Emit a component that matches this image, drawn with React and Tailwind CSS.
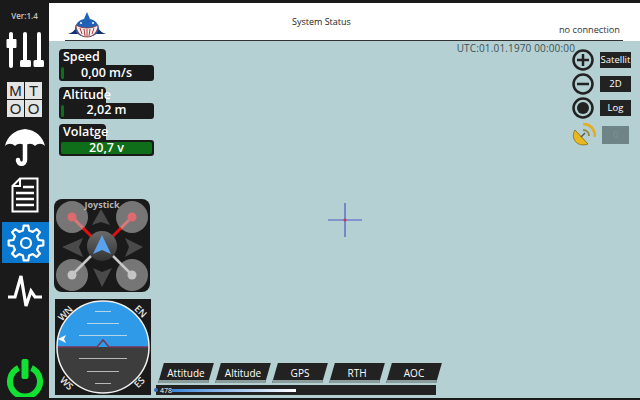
import React from 'react';

const font = { fontFamily: '"Open Sans", "Noto Sans", sans-serif' };

// outline of an 8 tooth gear, built from polar points
function gearPath(teeth, outer, inner) {
  const pts = [];
  const step = (Math.PI * 2) / teeth;
  for (let i = 0; i < teeth; i++) {
    const a = i * step - Math.PI / 2;
    const add = (r, d) => pts.push(`${(Math.cos(a + d * step) * r).toFixed(2)} ${(Math.sin(a + d * step) * r).toFixed(2)}`);
    add(inner, -0.3);
    add(outer, -0.17);
    add(outer, 0.17);
    add(inner, 0.3);
  }
  return `M${pts.join(' L')} Z`;
}

function SlidersIcon() {
  return (
    <svg width="38" height="36" viewBox="0 0 38 36" className="block">
      <g fill="#fff">
        <rect x="3" y="0" width="4" height="36" rx="2" />
        <rect x="0.5" y="7" width="10" height="9" rx="1" />
        <rect x="17" y="0" width="4" height="30" rx="2" />
        <rect x="14" y="28" width="11" height="7" rx="1.5" />
        <rect x="31" y="0" width="4" height="30" rx="2" />
        <rect x="27.5" y="28" width="10.5" height="7" rx="1.5" />
      </g>
    </svg>
  );
}

function ModeIcon() {
  const cell = 'w-[17px] h-[17px] bg-[#e4e4e4] text-[#222] text-[15px] leading-[17px] text-center';
  return (
    <div className="grid grid-cols-2 gap-[1px] w-[35px]" style={{ fontFamily: '"Liberation Sans", sans-serif' }}>
      <div className={cell}>M</div>
      <div className={cell}>T</div>
      <div className={cell}>O</div>
      <div className={cell}>O</div>
    </div>
  );
}

function UmbrellaIcon() {
  return (
    <svg width="40" height="38" viewBox="0 0 40 38" className="block">
      <path d="M20 0 C9 1 2 8 0 17 C3 14 7 14 10 17 C13 14 17 14 20 17 C23 14 27 14 30 17 C33 14 37 14 40 17 C38 8 31 1 20 0 Z" fill="#fff" />
      <path d="M20 15 V31 C20 36 13 36 13 31" fill="none" stroke="#fff" strokeWidth="4.5" strokeLinecap="round" />
    </svg>
  );
}

function DocIcon() {
  return (
    <svg width="28" height="36" viewBox="0 0 28 36" className="block">
      <path d="M9 1.5 H26.5 V34.5 H1.5 V9 Z M9 1.5 V9 H1.5" fill="#1a1a1a" stroke="#fff" strokeWidth="2" />
      <g stroke="#fff" strokeWidth="2.5">
        <path d="M12 10 H23" />
        <path d="M5 16 H23" />
        <path d="M5 22 H23" />
        <path d="M5 28 H23" />
      </g>
    </svg>
  );
}

function GearIcon() {
  return (
    <svg width="38" height="38" viewBox="-19 -19 38 38" className="block">
      <path d={gearPath(8, 17.5, 13)} fill="none" stroke="#fff" strokeWidth="2.2" strokeLinejoin="round" />
      <circle r="5" fill="none" stroke="#fff" strokeWidth="2.2" />
    </svg>
  );
}

function PulseIcon() {
  return (
    <svg width="36" height="36" viewBox="0 0 36 36" className="block">
      <path d="M1 24 H8 L14 3 L19 33 L24 18 L28 24 H35" fill="none" stroke="#fff" strokeWidth="3.2" strokeLinejoin="miter" />
    </svg>
  );
}

function PowerIcon() {
  return (
    <svg width="38" height="38" viewBox="0 0 38 38" className="block">
      <path d="M12.5 9 A15 15 0 1 0 25.5 9" fill="none" stroke="#12e033" strokeWidth="6" />
      <rect x="15.5" y="0" width="7" height="20" rx="2" fill="#12e033" />
    </svg>
  );
}

function Sidebar() {
  return (
    <div className="w-[49px] shrink-0 bg-[#1a1a1a] flex flex-col items-center">
      <div className="text-[#c8c8c8] text-[8px] font-semibold mt-[7px] h-[11px] leading-[11px]">Ver:1.4</div>
      <div className="mt-[11px]"><SlidersIcon /></div>
      <div className="mt-[14px]"><ModeIcon /></div>
      <div className="mt-[12px]"><UmbrellaIcon /></div>
      <div className="mt-[10px]"><DocIcon /></div>
      <div className="mt-[9px] w-[47px] h-[41px] ml-[2px] bg-[#0a78cf] flex items-center justify-center"><GearIcon /></div>
      <div className="mt-[10px]"><PulseIcon /></div>
      <div className="mt-auto mb-[3px]"><PowerIcon /></div>
    </div>
  );
}

function SharkLogo() {
  return (
    <svg width="40" height="26" viewBox="0 0 40 26" className="block">
      <path d="M1 22 C5 21 7 19 9 16 L13 22 Z" fill="#14306e" />
      <path d="M39 22 C35 21 33 19 31 16 L27 22 Z" fill="#14306e" />
      <path d="M20 0 L23 7 C28 8 32 12 32 17 C30 23 26 25 20 25 C14 25 10 23 8 17 C8 12 12 8 17 7 Z" fill="#1f62b8" />
      <path d="M9 13 C15 17 25 17 31 13 C31 20 26 25 20 25 C14 25 9 20 9 13 Z" fill="#f4f0ee" stroke="#8c2a2a" strokeWidth="0.8" />
      <path d="M13 16 L15 22 M17 17 L18 24 M20 17 V25 M23 17 L22 24 M27 16 L25 22" stroke="#b03838" strokeWidth="1" />
      <circle cx="14" cy="11" r="1" fill="#fff" />
      <circle cx="26" cy="11" r="1" fill="#fff" />
    </svg>
  );
}

function Gauge({ label, value, fill, fillClass }) {
  return (
    <div className="w-[95px] h-[32px] flex flex-col">
      <div className="w-[47px] h-[17px] bg-[#1a1a1a] rounded-t-[4px] text-white text-[12.5px] font-semibold leading-[16px] pl-[4px] whitespace-nowrap">{label}</div>
      <div className="relative h-[16px] -mt-[1px] bg-[#1a1a1a] rounded-[3px] rounded-tl-none p-[2px]">
        <div className={`h-full rounded-[2px] ${fillClass}`} style={{ width: fill }} />
        <div className="absolute inset-0 flex items-center justify-center text-white text-[12.5px] font-semibold leading-none">{value}</div>
      </div>
    </div>
  );
}

function Joystick() {
  const pads = [[18, 18], [78, 18], [18, 76], [78, 76]];
  return (
    <svg width="96" height="93" viewBox="0 0 96 93" className="block">
      <defs>
        <linearGradient id="hub" x1="0" y1="0" x2="0" y2="1">
          <stop offset="0" stopColor="#6a6a6a" />
          <stop offset="1" stopColor="#333" />
        </linearGradient>
      </defs>
      <rect width="96" height="93" rx="8" fill="#1a1a1a" />
      {pads.map(([x, y]) => <circle key={`${x}${y}`} cx={x} cy={y} r="16" fill="#767676" />)}
      <path d="M47 10 L56 26 L47 23 L38 26 Z" fill="#4a4a4a" />
      <path d="M48 88 L58 69 L48 73 L39 69 Z" fill="#4a4a4a" />
      <path d="M8 48 L29 39 L25 48 L29 58 Z" fill="#4a4a4a" />
      <path d="M89 48 L71 39 L75 48 L71 58 Z" fill="#4a4a4a" />
      <path d="M18 18 L30 30" stroke="#d87878" strokeWidth="3" />
      <path d="M78 18 L66 30" stroke="#d87878" strokeWidth="3" />
      <path d="M29 29 L38 38" stroke="#e01010" strokeWidth="3" />
      <path d="M67 29 L58 38" stroke="#e01010" strokeWidth="3" />
      <path d="M18 76 L38 56" stroke="#c8c8c8" strokeWidth="2.5" />
      <path d="M78 76 L58 56" stroke="#c8c8c8" strokeWidth="2.5" />
      <circle cx="18" cy="18" r="4.5" fill="#dc6a6e" />
      <circle cx="78" cy="18" r="4.5" fill="#dc6a6e" />
      <circle cx="18" cy="76" r="4.5" fill="#c4c4c4" />
      <circle cx="78" cy="76" r="4.5" fill="#c4c4c4" />
      <circle cx="48" cy="47" r="15" fill="url(#hub)" />
      <path d="M48 36 L57 55 L48 51 L39 55 Z" fill="#5aa2ee" />
      <text x="48" y="8.5" textAnchor="middle" fontSize="9" fontWeight="700" fill="#b4b4b4" style={font}>Joystick</text>
    </svg>
  );
}

function AttitudeIndicator() {
  const sky = [[12, 16], [24, 32], [36, 48]];
  const ground = [[59, 48], [72, 32], [84, 16]];
  const corners = [
    ['WN', 11, 15, -45], ['EN', 85, 13, 45], ['WS', 11, 85, 45], ['ES', 85, 84, -45],
  ];
  return (
    <svg width="96" height="96" viewBox="0 0 96 96" className="block">
      <rect width="96" height="96" fill="#1a1a1a" />
      <path d="M2 48 A46 46 0 0 1 94 48 Z" fill="#2f9be8" />
      <path d="M2 48 A46 46 0 0 0 94 48 Z" fill="#3d3d3d" />
      {sky.map(([y, w]) => <rect key={y} x={48 - w / 2} y={y} width={w} height="1" fill="#b4d4e8" />)}
      {ground.map(([y, w]) => <rect key={y} x={48 - w / 2} y={y} width={w} height="1" fill="#b8b8b8" />)}
      <path d="M2 48 H42 L48 41 L54 48 H94" fill="none" stroke="#7a3658" strokeWidth="1.5" />
      <path d="M3 40 L11 36 L9 40 L11 44 Z" fill="#fff" />
      <circle cx="48" cy="48" r="46" fill="none" stroke="#f0f0f0" strokeWidth="1.5" />
      {corners.map(([t, x, y, r]) => (
        <text key={t} x={x} y={y} transform={`rotate(${r} ${x} ${y})`} textAnchor="middle" dominantBaseline="middle" fontSize="9.5" fontWeight="600" fill="#e8e8e8" style={font}>{t}</text>
      ))}
    </svg>
  );
}

function CircleIcon({ kind }) {
  return (
    <svg width="22" height="22" viewBox="0 0 22 22" className="block">
      <circle cx="11" cy="11" r="9.5" fill="none" stroke="#222" strokeWidth="2.5" />
      {kind === 'plus' && <path d="M5 11 H17 M11 5 V17" stroke="#222" strokeWidth="2.5" />}
      {kind === 'minus' && <path d="M5 11 H17" stroke="#222" strokeWidth="2.5" />}
      {kind === 'dot' && <circle cx="11" cy="11" r="6" fill="#222" />}
    </svg>
  );
}

function SatelliteIcon() {
  return (
    <svg width="24" height="24" viewBox="0 0 24 24" className="block">
      <path d="M3 7 C-2 15 5 25 16 21 Z" fill="#e8b820" stroke="#8a6a10" strokeWidth="0.8" />
      <path d="M9 14 L13 10" stroke="#555" strokeWidth="1.5" />
      <path d="M11 7 C15 7 17 10 17 13" fill="none" stroke="#9a8a40" strokeWidth="2" />
      <path d="M11 1 C18 1 23 6 23 14" fill="none" stroke="#e0b020" strokeWidth="2.8" />
    </svg>
  );
}

function MapButton({ children }) {
  return <div className="w-[31px] h-[16px] bg-[#222] text-white text-[9.5px] leading-[16px] text-center whitespace-nowrap">{children}</div>;
}

function Tab({ children }) {
  return (
    <div className="relative w-[50px] h-[20px] flex items-center justify-center">
      <div className="absolute inset-0 -skew-x-[16deg] bg-[#222] border-b-[3px] border-[#8a9c9c]" />
      <span className="relative text-white text-[10px] font-medium">{children}</span>
    </div>
  );
}

export default function App() {
  return (
    <div className="w-[640px] h-[400px] flex flex-col overflow-hidden bg-[#1a1a1a]" style={font}>
      <div className="h-[3px] shrink-0 bg-[#1a1a1a]" />
      <div className="flex flex-1 min-h-0">
        <Sidebar />
        <div className="flex-1 flex flex-col min-w-0 mb-[2px]">
          {/* header */}
          <div className="h-[38px] shrink-0 bg-white flex items-stretch pl-[16px] pr-[17px]">
            <div className="flex-1 border-b border-[#333] relative flex">
              <div className="pt-[9px] pl-[2px]"><SharkLogo /></div>
              <div className="absolute left-[227px] top-[12px] text-[9px] leading-[14px] text-[#222]">System Status</div>
              <div className="ml-auto self-end text-[9.2px] leading-[14px] text-[#333] pr-[3px] pb-[3px]">no connection</div>
            </div>
          </div>

          {/* map */}
          <div className="relative flex-1 bg-[#b5d0d2] flex min-h-0">
            <div className="w-[106px] shrink-0 flex flex-col pl-[5px]">
              <div className="flex flex-col gap-[5.5px] pl-[5px] pt-[8px]">
                <Gauge label="Speed" value="0,00 m/s" fill="3%" fillClass="bg-[#0e6e1a]" />
                <Gauge label="Altitude" value="2,02 m" fill="3%" fillClass="bg-[#0e6e1a]" />
                <Gauge label="Volatge" value="20,7 v" fill="100%" fillClass="bg-[#0e6e1a]" />
              </div>
              <div className="mt-[43px]"><Joystick /></div>
              <div className="mt-[7px] ml-[1px]"><AttitudeIndicator /></div>
            </div>

            <div className="flex-1 flex flex-col min-w-0">
              <div className="text-[10px] leading-[14px] text-[#3c5057] text-right -mr-[4px] tracking-[0.15px] whitespace-nowrap">UTC:01.01.1970 00:00:00</div>
              <div className="mt-auto flex gap-[7px] pl-[6px]">
                <Tab>Attitude</Tab>
                <Tab>Altitude</Tab>
                <Tab>GPS</Tab>
                <Tab>RTH</Tab>
                <Tab>AOC</Tab>
              </div>
              <div className="relative ml-[1px] mt-[2px] mb-[3px] w-[280px] h-[10px] bg-[#222] flex items-center pl-[4px]">
                <div className="absolute -left-[2px] top-[3px] w-[4px] h-[4px] rounded-full bg-[#3a6ab8]" />
                <span className="text-white text-[7px] leading-none w-[12px]">478</span>
                <div className="w-[124px] h-[3px] bg-gradient-to-r from-[#3a86d8] to-white" />
              </div>
            </div>

            <div className="w-[69px] shrink-0 flex flex-col items-start pt-[7px] pl-[1px]">
              <div className="flex items-center gap-[6px] h-[24px]"><CircleIcon kind="plus" /><MapButton>Satellit</MapButton></div>
              <div className="flex items-center gap-[6px] h-[24px]"><CircleIcon kind="minus" /><MapButton>2D</MapButton></div>
              <div className="flex items-center gap-[6px] h-[24px]"><CircleIcon kind="dot" /><MapButton>Log</MapButton></div>
              <div className="flex items-center gap-[6px] h-[28px] mt-[1px]">
                <SatelliteIcon />
                <div className="w-[27px] h-[18px] bg-[#6f8487] text-[#7d9296] text-[9px] leading-[18px] text-center">0</div>
              </div>
            </div>

            {/* crosshair over the map */}
            <svg width="34" height="34" viewBox="0 0 34 34" className="absolute left-[279px] top-[162px]">
              <path d="M0 17 H34 M17 0 V34" stroke="#4a5ac8" strokeWidth="1.2" />
              <circle cx="17" cy="17" r="1.5" fill="#d0305a" />
            </svg>
          </div>
        </div>
      </div>
    </div>
  );
}
